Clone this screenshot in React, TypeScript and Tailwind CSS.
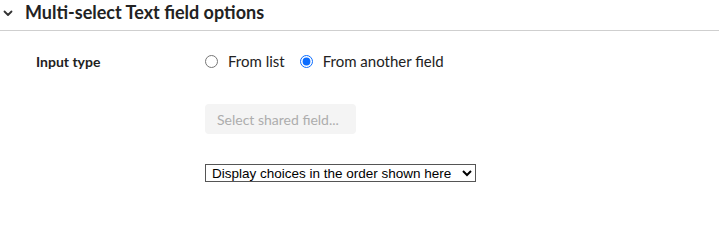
import React, { useState } from 'react';

export default function App() {
  const [inputType, setInputType] = useState<'list' | 'field'>('field');

  return (
    <div className="w-[719px] h-[210px] bg-white text-[#222] font-['Lato','Liberation_Sans',sans-serif]">
      {/* Section header */}
      <div className="flex items-center h-[31px] border-b border-[#cfcfcf] pl-[3px] pb-[6px]">
        <svg width="10" height="7" viewBox="0 0 10 7" className="mr-[12px] mt-[2px]">
          <path d="M1.5 1.5 L5 5 L8.5 1.5" fill="none" stroke="#333" strokeWidth="1.8" strokeLinecap="round" strokeLinejoin="round" />
        </svg>
        <h2 className="text-[18px] font-bold leading-none text-[#222]">Multi-select Text field options</h2>
      </div>

      <div className="flex pt-[19px]">
        <div className="w-[205px] pl-[36px] text-[14px] font-bold leading-[20px] pt-[2px]">Input type</div>

        <div className="flex flex-col">
          <div className="flex items-center gap-[10px] text-[15px] leading-[20px] h-[22px]">
            <label className="flex items-center gap-[10px]">
              <input
                type="radio"
                name="inputType"
                checked={inputType === 'list'}
                onChange={() => setInputType('list')}
                className="m-0 w-[13px] h-[13px] accent-[#0a6cff]"
              />
              <span>From list</span>
            </label>
            <label className="flex items-center gap-[10px] ml-[5px]">
              <input
                type="radio"
                name="inputType"
                checked={inputType === 'field'}
                onChange={() => setInputType('field')}
                className="m-0 w-[13px] h-[13px] accent-[#0a6cff]"
              />
              <span>From another field</span>
            </label>
          </div>

          <button
            disabled
            className="mt-[32px] w-[151px] h-[30px] rounded-[4px] bg-[#f4f4f4] text-left pl-[12px] text-[14px] text-[#adadad]"
          >
            Select shared field...
          </button>

          <select
            defaultValue="shown"
            className="mt-[30px] w-[271px] h-[18px] py-0 pl-[2px] border border-[#555] rounded-none bg-white text-[13.5px] leading-[16px] text-black font-['Liberation_Sans',sans-serif]"
          >
            <option value="shown">Display choices in the order shown here</option>
            <option value="alpha">Display choices alphabetically</option>
          </select>
        </div>
      </div>
    </div>
  );
}
